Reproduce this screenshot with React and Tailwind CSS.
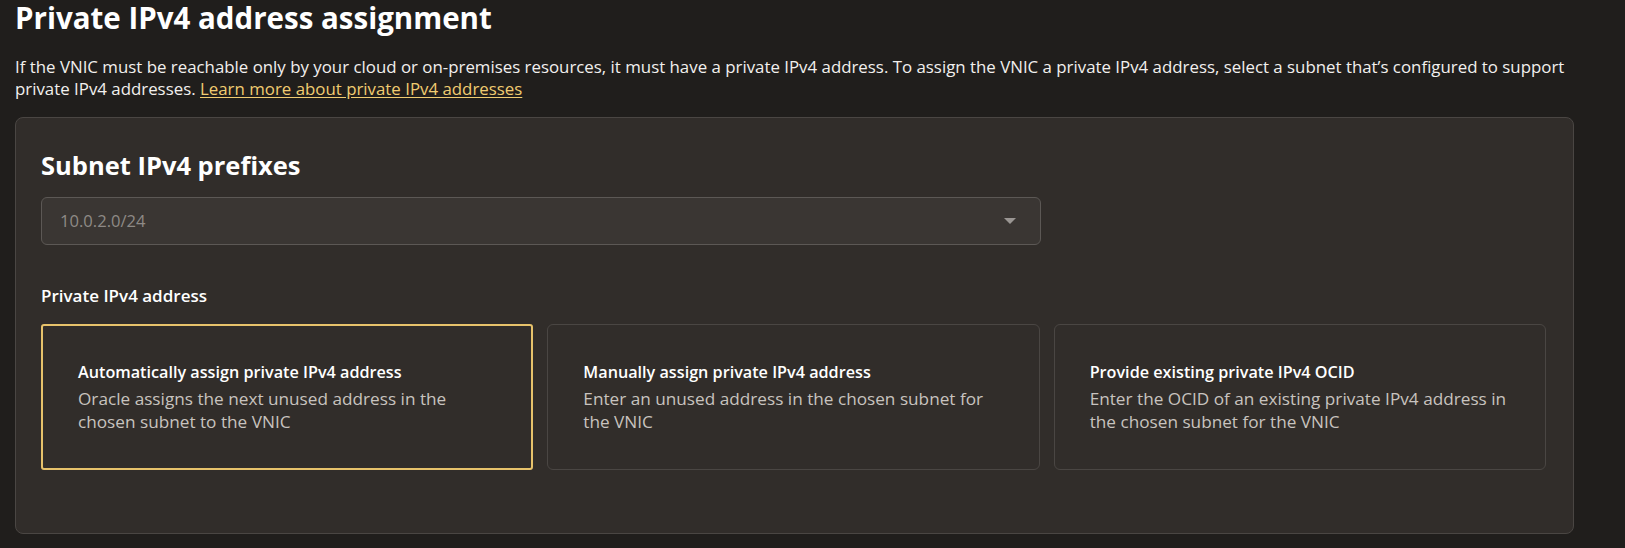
const OPTIONS = [
  {
    title: 'Automatically assign private IPv4 address',
    desc: 'Oracle assigns the next unused address in the chosen subnet to the VNIC',
    selected: true,
  },
  {
    title: 'Manually assign private IPv4 address',
    desc: 'Enter an unused address in the chosen subnet for the VNIC',
  },
  {
    title: 'Provide existing private IPv4 OCID',
    desc: 'Enter the OCID of an existing private IPv4 address in the chosen subnet for the VNIC',
  },
];

function OptionTile({ title, desc, selected }) {
  return (
    <div
      className={`h-[146px] flex flex-col justify-center px-[35px] ${
        selected ? 'border-2 border-[#e7c26b] rounded-[3px]' : 'border border-[#4a4643] rounded-md'
      }`}
    >
      <div className="text-[16.2px] leading-[22px] font-semibold text-white">{title}</div>
      <div className="mt-[4px] text-[17.2px] leading-[23px] text-[#c8c3bf] max-w-[418px]">{desc}</div>
    </div>
  );
}

export default function App() {
  return (
    <div className="min-h-screen bg-[#201e1c] pl-[15px] pr-[51px] pb-4 text-white [font-family:'Open_Sans',sans-serif]">
      <h1 className="text-[29.5px] leading-[36px] font-bold">Private IPv4 address assignment</h1>
      <p className="mt-[20px] text-[16.85px] leading-[22px] text-[#f2f0ee]">
        If the VNIC must be reachable only by your cloud or on-premises resources, it must have a private IPv4 address. To assign the VNIC a private IPv4 address, select a subnet that’s configured to support private IPv4 addresses.{' '}
        <a href="#" className="text-[#f0cc71] underline underline-offset-2">Learn more about private IPv4 addresses</a>
      </p>

      {/* Subnet card */}
      <div className="mt-[17px] bg-[#312d2a] border border-[#4a4643] rounded-lg pt-[31px] pb-[63px] pl-[25px] pr-[27px]">
        <h2 className="text-[25.5px] leading-[32px] font-bold">Subnet IPv4 prefixes</h2>
        <div className="mt-[16px] w-[1000px] h-[48px] flex items-center justify-between pl-[18px] pr-[24px] bg-[#3a3633] border border-[#5c5855] rounded-md">
          <span className="text-[16.6px] text-[#8e8a86]">10.0.2.0/24</span>
          <svg width="12" height="6" viewBox="0 0 12 6" className="text-[#9a9693]">
            <path d="M0 0h12L6 6z" fill="currentColor" />
          </svg>
        </div>

        <div className="mt-[41px] text-[17px] leading-[20px] font-semibold">Private IPv4 address</div>
        <div className="mt-[18px] grid grid-cols-3 gap-[14px]">
          {OPTIONS.map((o) => <OptionTile key={o.title} {...o} />)}
        </div>
      </div>
    </div>
  );
}
